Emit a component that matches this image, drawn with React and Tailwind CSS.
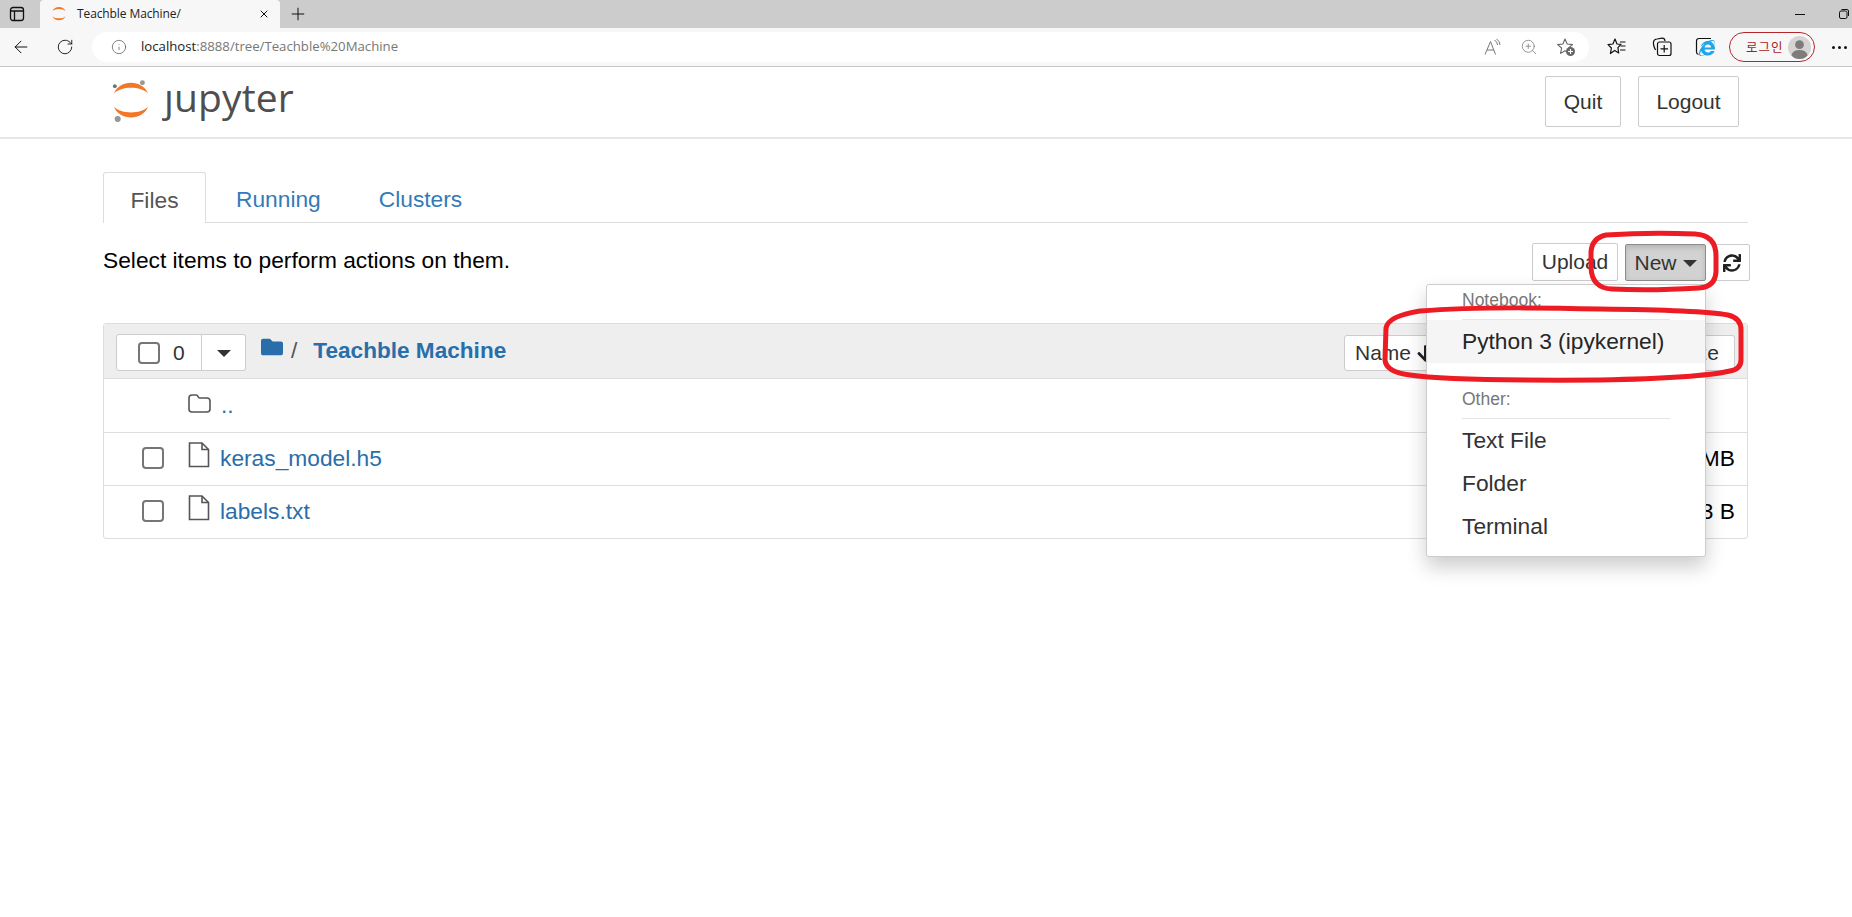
// App.jsx: Jupyter file tree inside an Edge window, New menu open
import { ArrowLeft, Info, Plus, RotateCw, X, ZoomIn } from "lucide-react";
import { FaArrowDown, FaFolder, FaInternetExplorer, FaSync } from "react-icons/fa";

function JupyterMark({ className }) {
  return (
    <svg className={className} viewBox="0 0 40 44" fill="none">
      <path d="M2 14 C8 -1 32 -1 38 14 C30 6 10 6 2 14 Z" fill="#f37726" />
      <path d="M2 28 C10 36 30 36 38 28 C32 43 8 43 2 28 Z" fill="#f37726" />
      <circle cx="32" cy="2.8" r="2.6" fill="#989798" />
      <circle cx="3" cy="6.4" r="2" fill="#6f7070" />
      <circle cx="6" cy="41" r="3.2" fill="#989798" />
    </svg>
  );
}

function SidebarIcon() {
  return (
    <svg className="w-[16px] h-[16px]" viewBox="0 0 16 16" fill="none" stroke="#111" strokeWidth="1.3">
      <rect x="1.5" y="1.5" width="13" height="13" rx="2.5" />
      <path d="M1.5 5 H14.5 M5.5 5 V14.5" />
    </svg>
  );
}

function ReadAloud() {
  return (
    <svg className="w-[18px] h-[18px]" viewBox="0 0 18 18" fill="none" stroke="#777" strokeWidth="1">
      <path d="M1 16.5 L6.5 3.5 L11.5 16.5 M3 12 H10" />
      <path d="M10.5 2 Q13.5 4 13.5 7 M12.5 0.8 Q16 3.5 16 7" />
    </svg>
  );
}

function StarAdd() {
  return (
    <svg className="w-[20px] h-[20px]" viewBox="0 0 20 20" fill="none">
      <path d="M9 2 L11.2 7 L16.5 7.6 L12.6 11 L13.6 16.4 L9 13.7 L4.6 16.4 L5.6 11 L1.6 7.6 L6.9 7 Z" stroke="#666" strokeWidth="1.1" strokeLinejoin="round" />
      <circle cx="14.5" cy="14.5" r="4.5" fill="#666" />
      <path d="M14.5 12 V17 M12 14.5 H17" stroke="#fff" strokeWidth="1.2" />
    </svg>
  );
}

function Favorites() {
  return (
    <svg className="w-[20px] h-[20px]" viewBox="0 0 20 20" fill="none" stroke="#111" strokeWidth="1.2">
      <path d="M8 2 L10 7 L14 7.4 L10.9 10.6 L11.7 16 L7.7 13.4 L3.4 16.6 L4.4 11 L1 7.6 L5.9 7 Z" strokeLinejoin="round" />
      <path d="M13 5 H18.5 M13.5 9 H18.5 M13 13 H18.5" />
    </svg>
  );
}

function Collections() {
  return (
    <svg className="w-[20px] h-[20px]" viewBox="0 0 20 20" fill="none" stroke="#111" strokeWidth="1.2">
      <path d="M3.5 13 Q1 8 1.5 5 Q2 2 5 2 L10 1.2 Q12.6 1 13 4" />
      <rect x="5.5" y="5" width="13.5" height="13.5" rx="2" />
      <path d="M12.2 8 V15.5 M8.5 11.8 H16" />
    </svg>
  );
}

function EdgeIeIcon() {
  return (
    <div className="relative -ml-[2px] w-[20px] h-[20px]">
      <svg className="w-[20px] h-[20px]" viewBox="0 0 20 20" fill="none" stroke="#111" strokeWidth="1.2">
        <path d="M16 1.5 H4 Q1.5 1.5 1.5 4 V15 Q1.5 17 3.5 17.5" />
      </svg>
      <FaInternetExplorer className="absolute left-[4px] top-[3px] w-[16px] h-[16px] text-[#1ea7e8]" />
    </div>
  );
}

function FileIcon() {
  return (
    <svg className="ml-[24px] -mt-[7px] w-[22px] h-[26px]" viewBox="0 0 22 26" fill="none" stroke="#555" strokeWidth="1.6">
      <path d="M1.5 1 H14 L20.5 7.5 V24.5 H1.5 Z" />
      <path d="M14 1 V7.5 H20.5" />
    </svg>
  );
}

function FolderIcon() {
  return (
    <svg className="-mt-[4px] w-[23px] h-[19px]" viewBox="0 0 23 19" fill="none" stroke="#555" strokeWidth="1.6">
      <path d="M1 4 Q1 1 4 1 H8 Q9.5 1 10 2.5 Q10.5 4 12 4 H19 Q22 4 22 7 V15 Q22 18 19 18 H4 Q1 18 1 15 Z" />
    </svg>
  );
}

function Caret() {
  return <span className="w-0 h-0 mt-[2px] border-x-[7px] border-x-transparent border-t-[7px] border-t-[#333]" />;
}

function Annotations() {
  return (
    <svg className="absolute left-0 top-0 w-[1852px] h-[917px] pointer-events-none" viewBox="0 0 1852 917" fill="none" stroke="#ed1c24" strokeWidth="5" strokeLinejoin="round">
      <path d="M1606 235 Q1650 232 1695 234 Q1716 235 1716 256 L1716 272 Q1715 287 1699 288 Q1650 291 1612 289 Q1592 288 1591 268 L1591 252 Q1592 238 1606 235 Z" />
      <path d="M1386 328 Q1388 316 1420 311 Q1480 306 1600 309 Q1700 310 1728 315 Q1741 318 1741 330 L1741 360 Q1741 369 1730 371 Q1700 378 1600 380 Q1450 381 1410 375 Q1386 372 1385 360 Z" />
    </svg>
  );
}

function BrowserChrome() {
  return (
    <div>
      <div className="h-[28px] bg-[#cccccc] flex items-center">
        <div className="w-[34px] flex justify-center">
          <SidebarIcon />
        </div>
        <div className="ml-[6px] w-[240px] h-[28px] bg-[#f7f7f7] rounded-t-[4px] flex items-center pl-[11px] pr-[10px]">
          <svg className="w-[16px] h-[16px]" viewBox="0 0 40 44">
            <path d="M2 14 C8 -1 32 -1 38 14 C30 6 10 6 2 14 Z" fill="#f37726" />
            <path d="M2 28 C10 36 30 36 38 28 C32 43 8 43 2 28 Z" fill="#f37726" />
          </svg>
          <span className="ml-[10px] text-[12px] text-[#222] font-['Open_Sans',sans-serif] tracking-[-0.1px]">Teachble Machine/</span>
          <X className="ml-auto w-[12px] h-[12px] text-[#111]" strokeWidth={2} />
        </div>
        <Plus className="ml-[8px] w-[20px] h-[20px] text-[#111]" strokeWidth={1.2} />
        <div className="ml-auto flex items-center gap-[34px] pr-[1px]">
          <div className="w-[10px] h-px bg-[#111]" />
          <svg className="w-[10px] h-[10px] mr-[2px]" viewBox="0 0 10 10" fill="none" stroke="#111" strokeWidth="1">
            <rect x="0.5" y="2" width="7.5" height="7.5" rx="1.5" />
            <path d="M2.5 0.5 H8 Q9.5 0.5 9.5 2 V7" />
          </svg>
        </div>
      </div>
      <div className="h-[39px] bg-[#f7f7f7] border-b border-[#c4c4c4] flex items-center">
        <ArrowLeft className="ml-[11px] w-[20px] h-[20px] text-[#111]" strokeWidth={1.2} />
        <RotateCw className="ml-[25px] w-[18px] h-[18px] text-[#111]" strokeWidth={1.2} />
        <div className="ml-[18px] w-[1497px] h-[30px] bg-white rounded-full flex items-center pl-[19px] pr-[13px]">
          <Info className="w-[16px] h-[16px] text-[#666]" strokeWidth={1.2} />
          <span className="ml-[14px] text-[13.2px] font-['Open_Sans',sans-serif] text-[#222]">
            localhost<span className="text-[#777]">:8888/tree/Teachble%20Machine</span>
          </span>
          <div className="ml-auto flex items-center gap-[18px]">
            <ReadAloud />
            <ZoomIn className="w-[18px] h-[18px] text-[#777]" strokeWidth={1} />
            <StarAdd />
          </div>
        </div>
        <div className="ml-[18px] flex items-center gap-[25px]">
          <Favorites />
          <Collections />
          <EdgeIeIcon />
        </div>
        <div className="ml-[14px] w-[86px] h-[30px] rounded-full border-[1.5px] border-[#b3262b] flex items-center pl-[16px] pr-[3px] justify-between">
          <span className="text-[12.5px] tracking-[1px] text-[#a61c22] font-['Noto_Sans_CJK_KR',sans-serif]">로그인</span>
          <svg className="w-[23px] h-[23px]" viewBox="0 0 24 24">
            <circle cx="12" cy="12" r="12" fill="#d6d4d2" />
            <circle cx="12" cy="9" r="4.6" fill="#7e7c7a" />
            <path d="M3.5 20 Q5 14.5 12 14.5 Q19 14.5 20.5 20 Q17 24 12 24 Q7 24 3.5 20 Z" fill="#7e7c7a" />
          </svg>
        </div>
        <div className="ml-[17px] flex gap-[3px]">
          <div className="w-[3px] h-[3px] rounded-full bg-[#111]" />
          <div className="w-[3px] h-[3px] rounded-full bg-[#111]" />
          <div className="w-[3px] h-[3px] rounded-full bg-[#111]" />
        </div>
      </div>
    </div>
  );
}

function Header() {
  return (
    <div className="h-[72px] border-b-[2px] border-[#e7e7e7] flex items-start pl-[112px] pr-[113px]">
      <JupyterMark className="mt-[13px] w-[38px] h-[42px]" />
      <span className="ml-[14px] mt-[3px] text-[39px] leading-[54px] tracking-[0.15px] text-[#4e4e4e] font-['Open_Sans',sans-serif]">
        <span className="inline-block [clip-path:inset(34%_-20%_-20%_-20%)]">j</span>upyter
      </span>
      <button className="ml-auto mt-[9px] w-[76px] h-[51px] border border-[#cccccc] rounded-[2px] text-[#333] text-[21px]">Quit</button>
      <button className="ml-[17px] mt-[9px] w-[101px] h-[51px] border border-[#cccccc] rounded-[2px] text-[#333] text-[21px]">Logout</button>
    </div>
  );
}

function Tabs() {
  return (
    <div className="mt-[33px] h-[51px] border-b border-[#dddddd] flex text-[22.75px] leading-[54px]">
      <div className="w-[103px] h-[51px] bg-white border border-b-0 border-[#dddddd] rounded-t-[3px] text-center text-[#555]">Files</div>
      <a className="ml-[30px] text-[#337ab7]">Running</a>
      <a className="ml-[58px] text-[#337ab7]">Clusters</a>
    </div>
  );
}

function Toolbar() {
  return (
    <div className="mt-[20px] flex items-start h-[38px] -mr-[2px]">
      <span className="text-[22.75px] leading-[32px] mt-[1px] text-black">Select items to perform actions on them.</span>
      <button className="ml-auto w-[86px] h-[38px] border border-[#cccccc] rounded-[2px] text-[21px] text-[#333]">Upload</button>
      <button className="ml-[7px] mt-[1px] w-[81px] h-[37px] border border-[#8c8c8c] bg-[#d2d2d2] shadow-[inset_0_3px_5px_rgba(0,0,0,0.125)] rounded-[2px] text-[21px] text-[#333] flex items-center justify-center gap-[6px]">
        New
        <Caret />
      </button>
      <button className="ml-[8px] mt-[1px] w-[36px] h-[37px] border border-[#cccccc] rounded-[2px] flex items-center justify-center">
        <FaSync className="w-[18px] h-[18px] text-[#222]" />
      </button>
    </div>
  );
}

function Checkbox() {
  return <input type="checkbox" className="appearance-none w-[22px] h-[22px] bg-white rounded-[4px] border-2 border-[#767676]" />;
}

function FileRow({ name, size }) {
  return (
    <div className="h-[53px] pb-[2px] border-t border-[#dddddd] flex items-center pl-[38px] pr-[12px]">
      <Checkbox />
      <FileIcon />
      <a className="ml-[10px] text-[#296eaa] text-[22.75px]">{name}</a>
      <span className="ml-auto text-[22.75px] text-black">{size}</span>
    </div>
  );
}

function FileList() {
  return (
    <div className="mt-[42px] h-[216px] border border-[#dddddd] rounded-[3px]">
      <div className="h-[55px] bg-[#eeeeee] border-b border-[#dddddd] flex items-start pl-[12px] pr-[12px]">
        <div className="mt-[10px] flex">
          <div className="w-[86px] h-[37px] bg-white border border-[#cccccc] rounded-l-[3px] flex items-center pl-[21px]">
            <Checkbox />
            <span className="ml-[13px] text-[21px] text-[#333]">0</span>
          </div>
          <div className="w-[44px] h-[37px] bg-white border border-l-0 border-[#cccccc] rounded-r-[3px] flex items-center justify-center">
            <Caret />
          </div>
        </div>
        <FaFolder className="ml-[15px] mt-[12px] w-[22px] h-[22px] text-[#296eaa]" />
        <span className="ml-[8px] mt-[9px] text-[22.75px] text-[#555]">/</span>
        <a className="ml-[16px] mt-[10px] text-[22.6px] font-bold text-[#296eaa]">Teachble Machine</a>
        <div className="ml-auto mt-[11px] flex">
          <div className="w-[120px] h-[36px] bg-white border border-[#cccccc] rounded-l-[3px] flex items-center pl-[10px] text-[21px] text-[#333]">
            Name
            <FaArrowDown className="ml-[5px] w-[19px] h-[19px] text-[#222]" />
          </div>
          <div className="w-[271px] h-[36px] bg-white border border-l-0 border-[#cccccc] rounded-r-[3px] flex items-center justify-end pr-[15px] text-[21px] text-[#333] whitespace-nowrap">File size</div>
        </div>
      </div>
      <div className="h-[53px] pb-[1px] flex items-center pl-[84px]">
        <FolderIcon />
        <a className="ml-[10px] text-[#296eaa] text-[22.75px]">..</a>
      </div>
      <FileRow name="keras_model.h5" size="2.45 MB" />
      <FileRow name="labels.txt" size="23 B" />
    </div>
  );
}

function NewMenu() {
  return (
    <div className="absolute left-[1426px] top-[284px] w-[280px] h-[273px] bg-white border border-[#cccccc] rounded-[3px] shadow-[0_10px_20px_rgba(0,0,0,0.2)] py-[7px]">
      <div className="h-[27px] pl-[35px] text-[17.5px] leading-[17px] text-[#777]">Notebook:</div>
      <div className="ml-[35px] w-[208px] h-px bg-[#e5e5e5]" />
      <div className="h-[43px] bg-[#f5f5f5] pl-[35px] text-[22.75px] leading-[43px] text-[#262626]">Python 3 (ipykernel)</div>
      <div className="mt-[28px] h-[27px] pl-[35px] text-[17.5px] leading-[17px] text-[#777]">Other:</div>
      <div className="ml-[35px] w-[208px] h-px bg-[#e5e5e5]" />
      <div className="h-[43px] pl-[35px] text-[22.75px] leading-[43px] text-[#333]">Text File</div>
      <div className="h-[43px] pl-[35px] text-[22.75px] leading-[43px] text-[#333]">Folder</div>
      <div className="h-[43px] pl-[35px] text-[22.75px] leading-[43px] text-[#333]">Terminal</div>
    </div>
  );
}

export default function App() {
  return (
    <div className="relative w-[1852px] h-[917px] overflow-hidden bg-white font-['Liberation_Sans',Arial,sans-serif]">
      <BrowserChrome />
      <Header />
      <div className="pl-[103px] pr-[104px]">
        <Tabs />
        <Toolbar />
        <FileList />
      </div>
      <NewMenu />
      <Annotations />
    </div>
  );
}
